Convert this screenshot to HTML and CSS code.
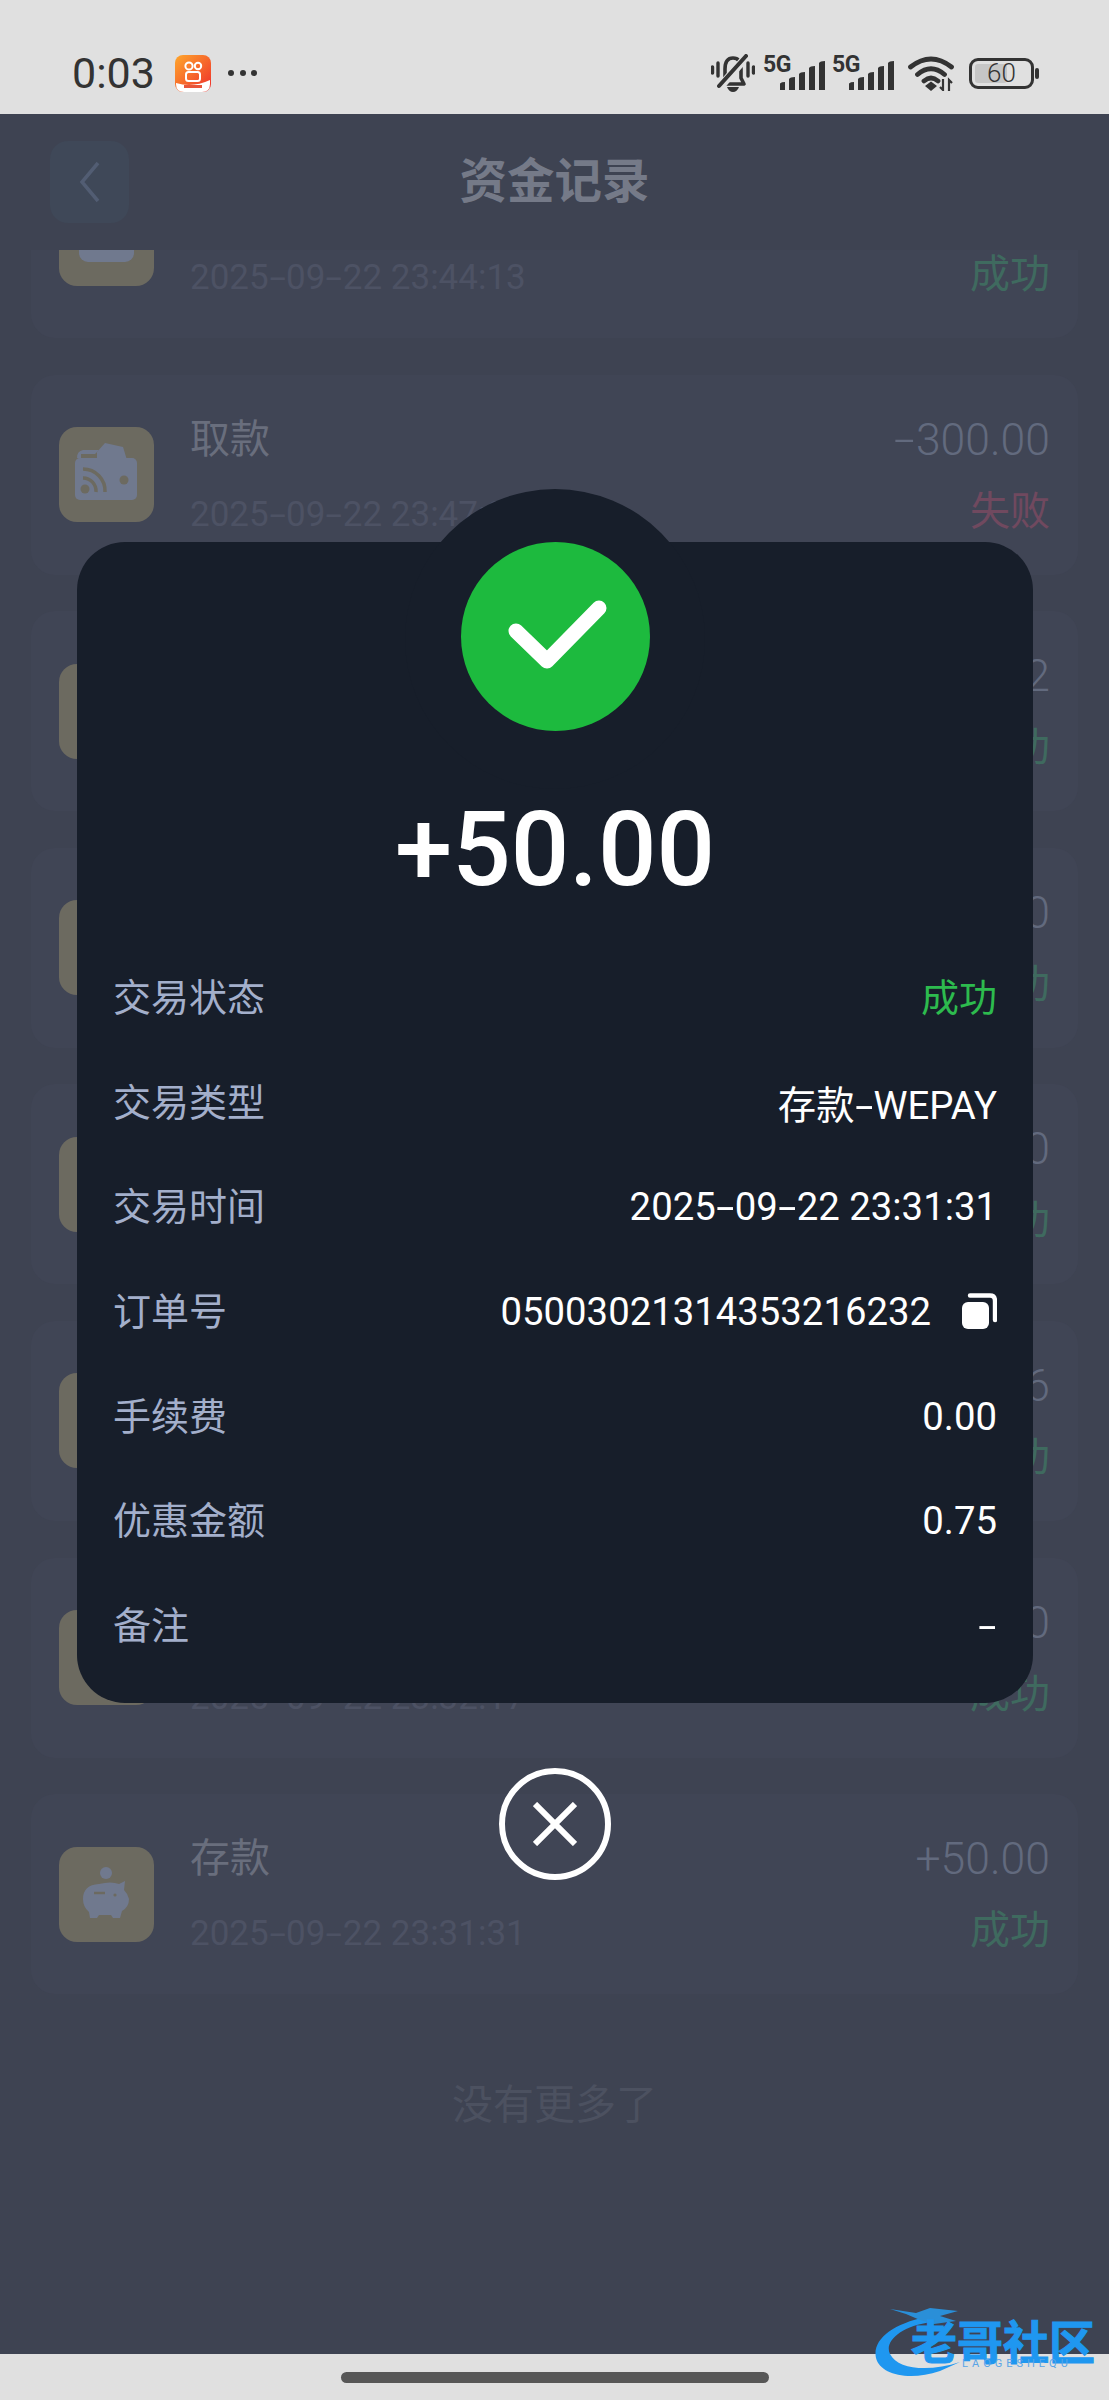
FILE: index.html
```html
<!DOCTYPE html>
<html lang="zh">
<head>
<meta charset="utf-8">
<title>资金记录</title>
<link rel="stylesheet" href="styles.css">
</head>
<body>
<div class="phone">
  <div class="statusbar">
    <div class="sb-left">
      <span class="time">0:03</span>
      <svg class="appicon" viewBox="0 0 36 37">
        <defs><linearGradient id="ag" x1="0" y1="0" x2="1" y2="1"><stop offset="0" stop-color="#ffa72b"/><stop offset="1" stop-color="#ee2c2c"/></linearGradient></defs>
        <rect width="36" height="37" rx="8" fill="url(#ag)"/>
        <path d="M1 28 Q18 33 35 25 V29 Q35 37 27 37 H9 Q1 37 1 29Z" fill="#fff"/>
        <circle cx="14" cy="11" r="3.6" fill="none" stroke="#fff" stroke-width="2"/>
        <circle cx="23" cy="11" r="3.2" fill="none" stroke="#fff" stroke-width="2"/>
        <rect x="11" y="17" width="14" height="9" rx="2.5" fill="none" stroke="#fff" stroke-width="2"/>
        <rect x="9" y="30" width="18" height="3" fill="#e8553a"/>
      </svg>
      <span class="dots"><i></i><i></i><i></i></span>
    </div>
    <div class="sb-right">
      <svg class="bell" viewBox="0 0 44 38">
        <path d="M14 26 V15 Q14 4 22 4 Q30 4 30 15 V24 L33 30 H10 Z" fill="none" stroke="#333" stroke-width="3.6" stroke-linejoin="round"/>
        <path d="M16 33 H28 Q26 38 22 38 Q18 38 16 33Z" fill="#333"/>
        <path d="M9 33 L36 2" stroke="#e0e0e0" stroke-width="8"/>
        <path d="M8 32 L35 2" stroke="#333" stroke-width="4" stroke-linecap="round"/>
        <path d="M1.5 13 V19 M7 9 V22 M37 9 V22 M42.5 13 V19" stroke="#333" stroke-width="3.4" stroke-linecap="round"/>
      </svg>
      <div class="sig">
        <span class="fiveg">5G</span>
        <svg class="bars" viewBox="0 0 45 29"><path d="M-1 29 V24 Q0 21 5 21 V29Z M9 29 V18 Q10 16 15 16 V29Z M19 29 V13 Q20 11 25 11 V29Z M29 29 V7 Q30 5 35 5 V29Z M39 29 V2 Q40 0 45 0 V29Z" fill="#333"/></svg>
      </div>
      <div class="sig sig2">
        <span class="fiveg">5G</span>
        <svg class="bars" viewBox="0 0 45 29"><path d="M-1 29 V24 Q0 21 5 21 V29Z M9 29 V18 Q10 16 15 16 V29Z M19 29 V13 Q20 11 25 11 V29Z M29 29 V7 Q30 5 35 5 V29Z M39 29 V2 Q40 0 45 0 V29Z" fill="#333"/></svg>
      </div>
      <svg class="wifi" viewBox="0 0 46 35">
        <path d="M2.5 11 Q23 -5 43.5 11 M9.5 18.5 Q23 7 36.5 18.5 M16 25 Q23 19 30 25" fill="none" stroke="#333" stroke-width="4.8" stroke-linecap="round"/>
        <path d="M17 30 L23 25.5 L29 30 L23 35Z" fill="#333"/>
        <path d="M35 23 V34 L32 31 M41 35 V24 L44 27" fill="none" stroke="#333" stroke-width="2.2"/>
      </svg>
      <div class="battery">
        <div class="batt-body"><span class="batt-fill"></span><span class="batt-num">60</span></div>
        <span class="batt-nub"></span>
      </div>
    </div>
  </div>

  <div class="header">
    <div class="back"><svg class="back-ico" viewBox="0 0 24 44"><path d="M20 3 L4 22 L20 41" fill="none" stroke="#525d73" stroke-width="3.5"/></svg></div>
    <h1 class="title">资金记录</h1>
  </div>

  <div class="list">
    <div class="card first">
      <div class="tile"><svg class="tile-ico" viewBox="0 0 95 95"><rect x="20" y="6" width="55" height="65" rx="9" fill="#70798e"/></svg></div>
      <div class="info"><span class="name">存款</span><span class="date">2025<b class="hy">-</b>09<b class="hy">-</b>22 23:44:13</span></div>
      <div class="meta"><span class="amt">+50.00</span><span class="st ok">成功</span></div>
    </div>
    <div class="card">
      <div class="tile"><svg class="tile-ico" viewBox="0 0 95 95">
        <path d="M38 25 L46 16 L64 20 L68 33 H38Z" fill="#70798e"/>
        <path d="M18 31 Q18 24 24 23 H40 L36 27 H22 V31Z" fill="#70798e"/>
        <rect x="16" y="31" width="62" height="42" rx="5" fill="#70798e"/>
        <circle cx="26" cy="62" r="4.5" fill="#6c6a60"/>
        <path d="M24 51 A13 13 0 0 1 37 65 M24 42 A22 22 0 0 1 46 65" fill="none" stroke="#6c6a60" stroke-width="3.5"/>
        <circle cx="65" cy="53" r="4.5" fill="#6c6a60"/>
      </svg></div>
      <div class="info"><span class="name">取款</span><span class="date">2025<b class="hy">-</b>09<b class="hy">-</b>22 23:47:00</span></div>
      <div class="meta"><span class="amt"><b class="hy">-</b>300.00</span><span class="st bad">失败</span></div>
    </div>
    <div class="card"><div class="tile"></div><div class="info"></div><div class="meta"><span class="amt">2</span><span class="st ok">成功</span></div></div>
    <div class="card"><div class="tile"></div><div class="info"></div><div class="meta"><span class="amt">0</span><span class="st ok">成功</span></div></div>
    <div class="card"><div class="tile"></div><div class="info"></div><div class="meta"><span class="amt">0</span><span class="st ok">成功</span></div></div>
    <div class="card"><div class="tile"></div><div class="info"></div><div class="meta"><span class="amt">6</span><span class="st ok">成功</span></div></div>
    <div class="card">
      <div class="tile"></div>
      <div class="info"><span class="name">存款</span><span class="date">2025<b class="hy">-</b>09<b class="hy">-</b>22 23:32:17</span></div>
      <div class="meta"><span class="amt">0</span><span class="st ok">成功</span></div>
    </div>
    <div class="card">
      <div class="tile"><svg class="tile-ico" viewBox="0 0 95 95">
        <circle cx="47" cy="26" r="6" fill="#70798e"/>
        <path d="M24 52 Q24 38 40 37 Q52 34 60 37 L66 34 L65 43 Q69 47 70 52 Q70 60 63 64 L61 71 H54 L52 68 H40 L38 71 H31 L30 65 Q24 60 24 52Z" fill="#70798e"/>
        <path d="M35 46 H46" stroke="#6c6a60" stroke-width="2.5"/>
        <circle cx="56" cy="48" r="1.6" fill="#6c6a60"/>
      </svg></div>
      <div class="info"><span class="name">存款</span><span class="date">2025<b class="hy">-</b>09<b class="hy">-</b>22 23:31:31</span></div>
      <div class="meta"><span class="amt">+50.00</span><span class="st ok">成功</span></div>
    </div>
    <div class="nomore">没有更多了</div>
  </div>

  <div class="navbar"><span class="home"></span></div>

  <div class="overlay">
    <div class="modal">
      <span class="bump"></span>
      <div class="okmark"><svg class="check" viewBox="0 0 189 189"><path d="M55 89 L86 119 L138 66" fill="none" stroke="#fff" stroke-width="15" stroke-linecap="round" stroke-linejoin="round"/></svg></div>
      <div class="big">+50.00</div>
      <div class="rows">
        <div class="row"><span class="lab">交易状态</span><span class="val green">成功</span></div>
        <div class="row"><span class="lab">交易类型</span><span class="val cjk"><span>存款<b class="hy">-</b>WEPAY</span></span></div>
        <div class="row"><span class="lab">交易时间</span><span class="val"><span>2025<b class="hy">-</b>09<b class="hy">-</b>22 23:31:31</span></span></div>
        <div class="row"><span class="lab">订单号</span><span class="val order"><span class="num">05003021314353216232</span><svg class="copy" viewBox="0 0 36 36"><rect x="1" y="9" width="27" height="27" rx="6" fill="#fff"/><path d="M9 2.5 H29 Q34 2.5 34 8 V27" fill="none" stroke="#fff" stroke-width="4.4" stroke-linecap="round"/></svg></span></div>
        <div class="row"><span class="lab">手续费</span><span class="val">0.00</span></div>
        <div class="row"><span class="lab">优惠金额</span><span class="val">0.75</span></div>
        <div class="row"><span class="lab">备注</span><span class="val"><b class="hy">-</b></span></div>
      </div>
    </div>
    <button class="close" type="button"><svg class="close-ico" viewBox="0 0 44 44"><path d="M2 2 L42 42 M42 2 L2 42" stroke="#fff" stroke-width="6"/></svg></button>
  </div>

  <div class="watermark">
    <svg class="wm-art" viewBox="0 0 240 80">
      <path d="M58 17 C24 24 4 40 8 58 C12 74 40 82 72 71 L92 62 C62 72 30 70 22 54 C16 42 32 26 64 22Z" fill="#1f97f0"/>
      <path d="M22 9 L48 13 L62 8 L90 11 L72 16 L88 21 L66 24 L52 20 L38 14Z" fill="#2a8fd8"/>
    </svg>
    <span class="wm-cn">老哥社区</span>
    <span class="wm-en">LAOGESHEQU</span>
  </div>
</div>
</body>
</html>
```

FILE: styles.css
```css
* { box-sizing: border-box; }
html, body { margin: 0; padding: 0; }
body {
  font-family: Roboto, "Noto Sans CJK SC", sans-serif;
  background: #3e4352;
}
.phone {
  position: relative;
  width: 1109px;
  height: 2400px;
  display: flex;
  flex-direction: column;
  overflow: hidden;
  background: #3e4352;
}

/* status bar */
.statusbar {
  height: 114px;
  flex: none;
  background: #e0e0e0;
  padding: 32px 70px 0 72px;
  display: flex;
  align-items: center;
  justify-content: space-between;
  color: #333;
}
.sb-left { display: flex; align-items: center; }
.time { font-size: 43px; line-height: 46px; width: 103px; }
.appicon { width: 36px; height: 37px; }
.dots { display: flex; gap: 5.5px; margin-left: 17px; }
.dots i { width: 6px; height: 6px; border-radius: 50%; background: #333; }
.sb-right { display: flex; align-items: center; }
.bell { width: 44px; height: 38px; }
.sig { position: relative; display: flex; margin-left: 8px; height: 34px; }
.sig2 { margin-left: 7px; }
.fiveg {
  font-size: 23px;
  font-weight: 700;
  line-height: 17px;
  letter-spacing: -0.5px;
  width: 17px;
}
.bars { width: 45px; height: 29px; margin-top: 5px; }
.wifi { width: 46px; height: 35px; margin-left: 14px; }
.battery { display: flex; align-items: center; margin-left: 15px; gap: 1px; }
.batt-body {
  position: relative;
  width: 65px;
  height: 31px;
  border: 3px solid #333;
  border-radius: 9px;
  padding: 3px;
  display: flex;
}
.batt-fill { width: 60%; background: #c6c6c6; border-radius: 3px; }
.batt-num {
  position: absolute;
  inset: 0;
  text-align: center;
  font-size: 26px;
  line-height: 25px;
  font-weight: 300;
  color: #333;
}
.batt-nub { width: 4px; height: 11px; border-radius: 2px; background: #333; }

/* header */
.header {
  height: 136px;
  flex: none;
  position: relative;
  z-index: 2;
  background: #3e4352;
  display: flex;
  align-items: center;
  justify-content: center;
}
.back {
  position: absolute;
  left: 50px;
  top: 27px;
  width: 79px;
  height: 82px;
  border-radius: 18px;
  background: #3f4858;
  display: flex;
  align-items: center;
  justify-content: center;
}
.back-ico { width: 24px; height: 44px; }
.title {
  margin: 0;
  font-size: 47.5px;
  font-weight: 700;
  line-height: 60px;
  color: #757a88;
}

/* list */
.list {
  flex: 1;
  min-height: 0;
  overflow: hidden;
  display: flex;
  flex-direction: column;
  gap: 36.6px;
  padding: 0 31px;
}
.card {
  flex: none;
  height: 200px;
  border-radius: 24px;
  background: #404555;
  display: flex;
  align-items: center;
  padding: 0 28px 0 28px;
}
.card.first { margin-top: -112px; }
.tile {
  flex: none;
  width: 95px;
  height: 95px;
  border-radius: 18px;
  background: #6c6a60;
}
.tile-ico { display: block; width: 95px; height: 95px; }
.info {
  flex: 1;
  margin-left: 36px;
  padding-top: 5px;
  display: flex;
  flex-direction: column;
  gap: 25px;
}
.name { font-size: 40px; line-height: 50px; font-weight: 400; color: #696e7d; }
.date { font-size: 35px; line-height: 50px; font-weight: 400; color: #4d5264; }
.meta {
  padding-top: 2px;
  display: flex;
  flex-direction: column;
  align-items: flex-end;
  gap: 22px;
}
.amt { font-size: 44.5px; line-height: 50px; font-weight: 300; color: #626a7e; }
.st { font-size: 40px; line-height: 50px; }
.st.ok { color: #3f6a5f; }
.st.bad { color: #70495f; }
.nomore {
  flex: none;
  text-align: center;
  font-size: 41px;
  line-height: 50px;
  color: #4c5160;
  margin-top: 49px;
}
.hy {
  display: inline-block;
  font-weight: inherit;
  margin: 0 0.11em;
  transform: scaleX(1.7);
}

/* bottom nav */
.navbar {
  height: 46px;
  flex: none;
  background: #e0e0e0;
  display: flex;
  justify-content: center;
  padding-top: 18px;
}
.home { width: 428px; height: 11px; border-radius: 6px; background: #575757; }

/* overlay and modal */
.overlay {
  position: absolute;
  left: 77px;
  top: 542px;
  width: 956px;
  z-index: 5;
  display: flex;
  flex-direction: column;
  align-items: center;
}
.modal {
  position: relative;
  width: 100%;
  height: 1161px;
  border-radius: 48px;
  background: #171e2a;
}
.bump {
  position: absolute;
  left: 328px;
  top: -53px;
  width: 300px;
  height: 300px;
  border-radius: 50%;
  background: #171e2a;
}
.okmark {
  position: relative;
  width: 189px;
  height: 189px;
  margin: 0 auto;
  border-radius: 50%;
  background: #1dba3e;
}
.check { display: block; width: 189px; height: 189px; }
.big {
  position: relative;
  height: 212px;
  display: flex;
  align-items: center;
  justify-content: center;
  font-size: 103px;
  font-weight: 500;
  color: #fff;
  padding-top: 25px;
}
.rows { padding: 0 36px 0 36px; }
.row {
  height: 104.7px;
  display: flex;
  align-items: center;
  justify-content: space-between;
  font-size: 38px;
}
.lab { color: #a3afcb; padding-bottom: 2px; }
.val {
  color: #fff;
  font-size: 38.3px;
  font-weight: 400;
  display: flex;
  align-items: center;
  padding-top: 4px;
}
.val.green { color: #2dbb4e; font-size: 38px; padding: 0 0 2px; }
.copy { width: 36px; height: 36px; margin-left: 30px; }

.close {
  width: 112px;
  height: 112px;
  margin-top: 65px;
  padding: 0;
  border: 6px solid #fff;
  border-radius: 50%;
  background: transparent;
  display: flex;
  align-items: center;
  justify-content: center;
}
.close-ico { width: 44px; height: 44px; }

/* watermark */
.watermark {
  position: absolute;
  left: 868px;
  top: 2300px;
  width: 240px;
  height: 80px;
  z-index: 6;
}
.wm-art { display: block; width: 240px; height: 80px; }
.wm-cn {
  position: absolute;
  left: 43px;
  top: 29px;
  font-size: 46px;
  line-height: 28px;
  font-weight: 700;
  white-space: nowrap;
  color: #1f97f0;
  -webkit-text-stroke: 1px #1f97f0;
}
.wm-en {
  position: absolute;
  left: 94px;
  top: 59px;
  font-size: 11px;
  line-height: 10px;
  letter-spacing: 4px;
  color: #5aa5e6;
}
```
